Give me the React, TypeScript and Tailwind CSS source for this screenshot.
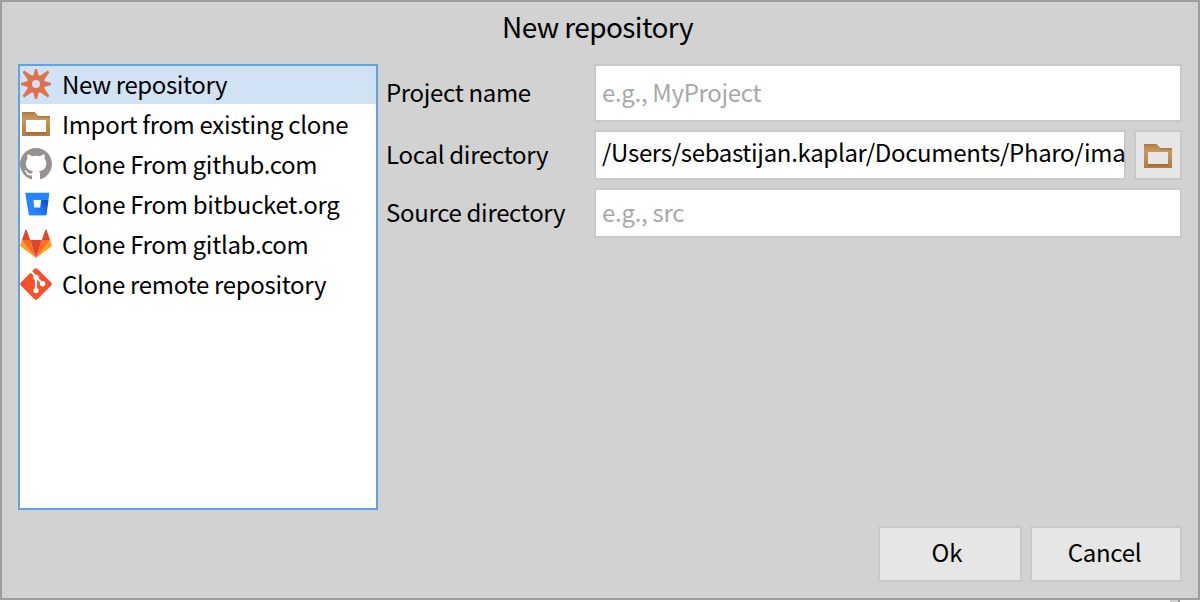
import React from "react";

function SparkIcon() {
  const rays = [0, 45, 90, 135, 180, 225, 270, 315];
  return (
    <svg width="32" height="32" viewBox="0 0 32 32" overflow="visible">
      <g fill="#e0714d">
        {rays.map((a) => (
          <path key={a} d={a % 90 === 0 ? "M12.8 9 L15.1 1 H16.9 L19.2 9 Z" : "M12.8 9 L14.8 -1.8 H17.2 L19.2 9 Z"} transform={`rotate(${a} 16 16)`} />
        ))}
      </g>
      <circle cx="16" cy="16" r="6.6" fill="none" stroke="#e0714d" strokeWidth="5.2" />
    </svg>
  );
}

function FolderIcon({ inner }: { inner: string }) {
  return (
    <svg width="32" height="32" viewBox="0 0 32 32" shapeRendering="crispEdges">
      <defs>
        <linearGradient id="folder" x1="0" y1="0" x2="0" y2="1">
          <stop offset="0" stopColor="#b98245" />
          <stop offset="0.3" stopColor="#c8985a" />
          <stop offset="1" stopColor="#b07a3c" />
        </linearGradient>
      </defs>
      <path d="M2 4 H14 L18 8 H30 V28 H2 Z" fill="url(#folder)" />
      <path d="M2 4 H14 V6 H2 Z M18 8 H30 V10 H18 Z" fill="#b27d48" />
      <path d="M6 12 H26 V24 H6 Z" fill={inner} />
      <path d="M6 24 H26 V26 H6 Z" fill="#a26d3b" />
    </svg>
  );
}

function GithubIcon() {
  return (
    <svg width="32" height="32" viewBox="0 0 16 16">
      <path
        fill="#989190"
        d="M8 0C3.58 0 0 3.58 0 8c0 3.54 2.29 6.53 5.47 7.59.4.07.55-.17.55-.38 0-.19-.01-.82-.01-1.49-2.01.37-2.53-.49-2.69-.94-.09-.23-.48-.94-.82-1.13-.28-.15-.68-.52-.01-.53.63-.01 1.08.58 1.23.82.72 1.21 1.87.87 2.33.66.07-.52.28-.87.51-1.07-1.78-.2-3.64-.89-3.64-3.95 0-.87.31-1.59.82-2.15-.08-.2-.36-1.02.08-2.12 0 0 .67-.21 2.2.82.64-.18 1.32-.27 2-.27s1.36.09 2 .27c1.53-1.04 2.2-.82 2.2-.82.44 1.1.16 1.92.08 2.12.51.56.82 1.27.82 2.15 0 3.07-1.87 3.75-3.65 3.95.29.25.54.73.54 1.48 0 1.07-.01 1.93-.01 2.2 0 .21.15.46.55.38A8.01 8.01 0 0 0 16 8c0-4.42-3.58-8-8-8z"
      />
    </svg>
  );
}

function BitbucketIcon() {
  return (
    <svg width="32" height="32" viewBox="0 0 32 32">
      <defs>
        <linearGradient id="bucket" x1="1" y1="0.3" x2="0.4" y2="0.85">
          <stop offset="0" stopColor="#0a55cf" />
          <stop offset="1" stopColor="#2684ff" />
        </linearGradient>
      </defs>
      <path d="M6.2 4.8 H28.6 Q29.4 4.8 29.3 5.7 L26.4 26.4 Q26.2 27.3 25.2 27.3 H10 Q9 27.3 8.8 26.4 L5.3 5.7 Q5.2 4.8 6.2 4.8 Z" fill="#2684ff" />
      <path d="M21 12 H28.4 L26.4 26.4 Q26.2 27.3 25.2 27.3 H10 L15 20 H20 Z" fill="url(#bucket)" />
      <path d="M13.4 12 H21 L20.2 19.6 H14.2 Z" fill="#fff" />
    </svg>
  );
}

function GitlabIcon() {
  return (
    <svg width="32" height="32" viewBox="0 0 32 32">
      <path d="M16 30 L0.5 18.6 Q-0.1 18 0.2 17 L2 11.6 Z" fill="#fca326" />
      <path d="M16 30 L31.5 18.6 Q32.1 18 31.8 17 L30 11.6 Z" fill="#fca326" />
      <path d="M16 30 L2 12 H10.2 Z" fill="#fc6d26" />
      <path d="M16 30 L30 12 H21.8 Z" fill="#fc6d26" />
      <path d="M16 30 L10.2 12 H21.8 Z" fill="#e24329" />
      <path d="M2 12 L5.4 2 Q6 1 6.6 2 L10.2 12 Z" fill="#e24329" />
      <path d="M30 12 L26.6 2 Q26 1 25.4 2 L21.8 12 Z" fill="#e24329" />
    </svg>
  );
}

function GitIcon() {
  return (
    <svg width="32" height="32" viewBox="0 0 32 32">
      <path d="M14.6 0.8 Q16 -0.4 17.4 0.8 L31.2 14.6 Q32.4 16 31.2 17.4 L17.4 31.2 Q16 32.4 14.6 31.2 L0.8 17.4 Q-0.4 16 0.8 14.6 Z" fill="#fb4e2a" />
      <g stroke="#fff" strokeWidth="2.2" fill="none">
        <path d="M11 3.5 L16 8.8 V23 M16 9 L22.4 15.6" />
      </g>
      <g fill="#fff">
        <circle cx="16" cy="9.4" r="2.7" />
        <circle cx="16" cy="22.6" r="2.7" />
        <circle cx="22.6" cy="15.8" r="2.7" />
      </g>
    </svg>
  );
}

const sources = [
  { label: "New repository", icon: <SparkIcon />, tracking: "tracking-[-0.4px]" },
  { label: "Import from existing clone", icon: <FolderIcon inner="#ffffff" />, tracking: "tracking-[-0.32px]" },
  { label: "Clone From github.com", icon: <GithubIcon />, tracking: "tracking-[-0.3px]" },
  { label: "Clone From bitbucket.org", icon: <BitbucketIcon />, tracking: "tracking-[-0.29px]" },
  { label: "Clone From gitlab.com", icon: <GitlabIcon />, tracking: "tracking-[-0.3px]" },
  { label: "Clone remote repository", icon: <GitIcon />, tracking: "tracking-[-0.31px]" },
];

export default function App() {
  return (
    <div className="h-[602px] w-[1200px] overflow-hidden bg-white font-['Noto_Sans_CJK_SC',sans-serif] text-[24px] leading-[40px] tracking-[-0.28px] whitespace-nowrap text-black">
      <div className="flex h-[600px] flex-col border-2 border-[#9d9d9d] bg-[#d2d2d2] px-4">
        <h1 className="h-[62px] pt-1 pr-[5px] text-center text-[28px] font-normal tracking-[-0.6px]">New repository</h1>
        <div className="flex h-[446px]">
          <ul className="w-[360px] border-2 border-[#5fa3e4] bg-white">
            {sources.map((s, i) => (
              <li key={s.label} className={i === 0 ? "flex h-[38px] items-end bg-[#d0e2f4]" : "flex h-10 items-end"}>
                <span className="flex h-10 w-[42px] pt-1">{s.icon}</span>
                <span className={s.tracking}>{s.label}</span>
              </li>
            ))}
          </ul>
          <div className="flex w-[804px] flex-col gap-2 pl-2">
            <div className="flex h-[58px] items-center">
              <label className="w-[208px] pb-0.5 tracking-[-0.33px]">Project name</label>
              <div className="flex h-full w-[588px] items-center border-2 border-[#c8c8c8] bg-white pb-0.5 pl-1.5 tracking-[-0.32px] text-[#a8a8a8]">e.g., MyProject</div>
            </div>
            <div className="flex h-[50px] items-center">
              <label className="w-[208px] pb-0.5">Local directory</label>
              <div className="flex h-full w-[532px] items-center border-2 border-[#c8c8c8] bg-white pb-1.5 pl-1.5 tracking-[-0.32px]">
                <span>/Users/sebastijan.kaplar/Documents/Pharo/ima</span>
              </div>
              <button className="ml-2 flex h-full w-12 items-center justify-center border-2 border-[#c8c8c8] bg-[#e6e6e6] pt-0.5">
                <FolderIcon inner="#e6e6e6" />
              </button>
            </div>
            <div className="flex h-[50px] items-center">
              <label className="w-[208px] pb-0.5 tracking-[-0.32px]">Source directory</label>
              <div className="flex h-full w-[588px] items-center border-2 border-[#c8c8c8] bg-white pb-0.5 pl-1.5 text-[#a8a8a8]">e.g., src</div>
            </div>
          </div>
        </div>
        <div className="mt-4 flex h-14 justify-end gap-2">
          <button className="w-36 border-2 border-[#c8c8c8] bg-[#e6e6e6] pr-1.5 pb-1 tracking-normal">Ok</button>
          <button className="w-[152px] border-2 border-[#c8c8c8] bg-[#e6e6e6] pr-[3px] pb-1">Cancel</button>
        </div>
      </div>
      <div className="ml-[1170px] h-0.5 w-2.5 border-r-2 border-[#9d9d9d] bg-[#d2d2d2]" />
    </div>
  );
}
